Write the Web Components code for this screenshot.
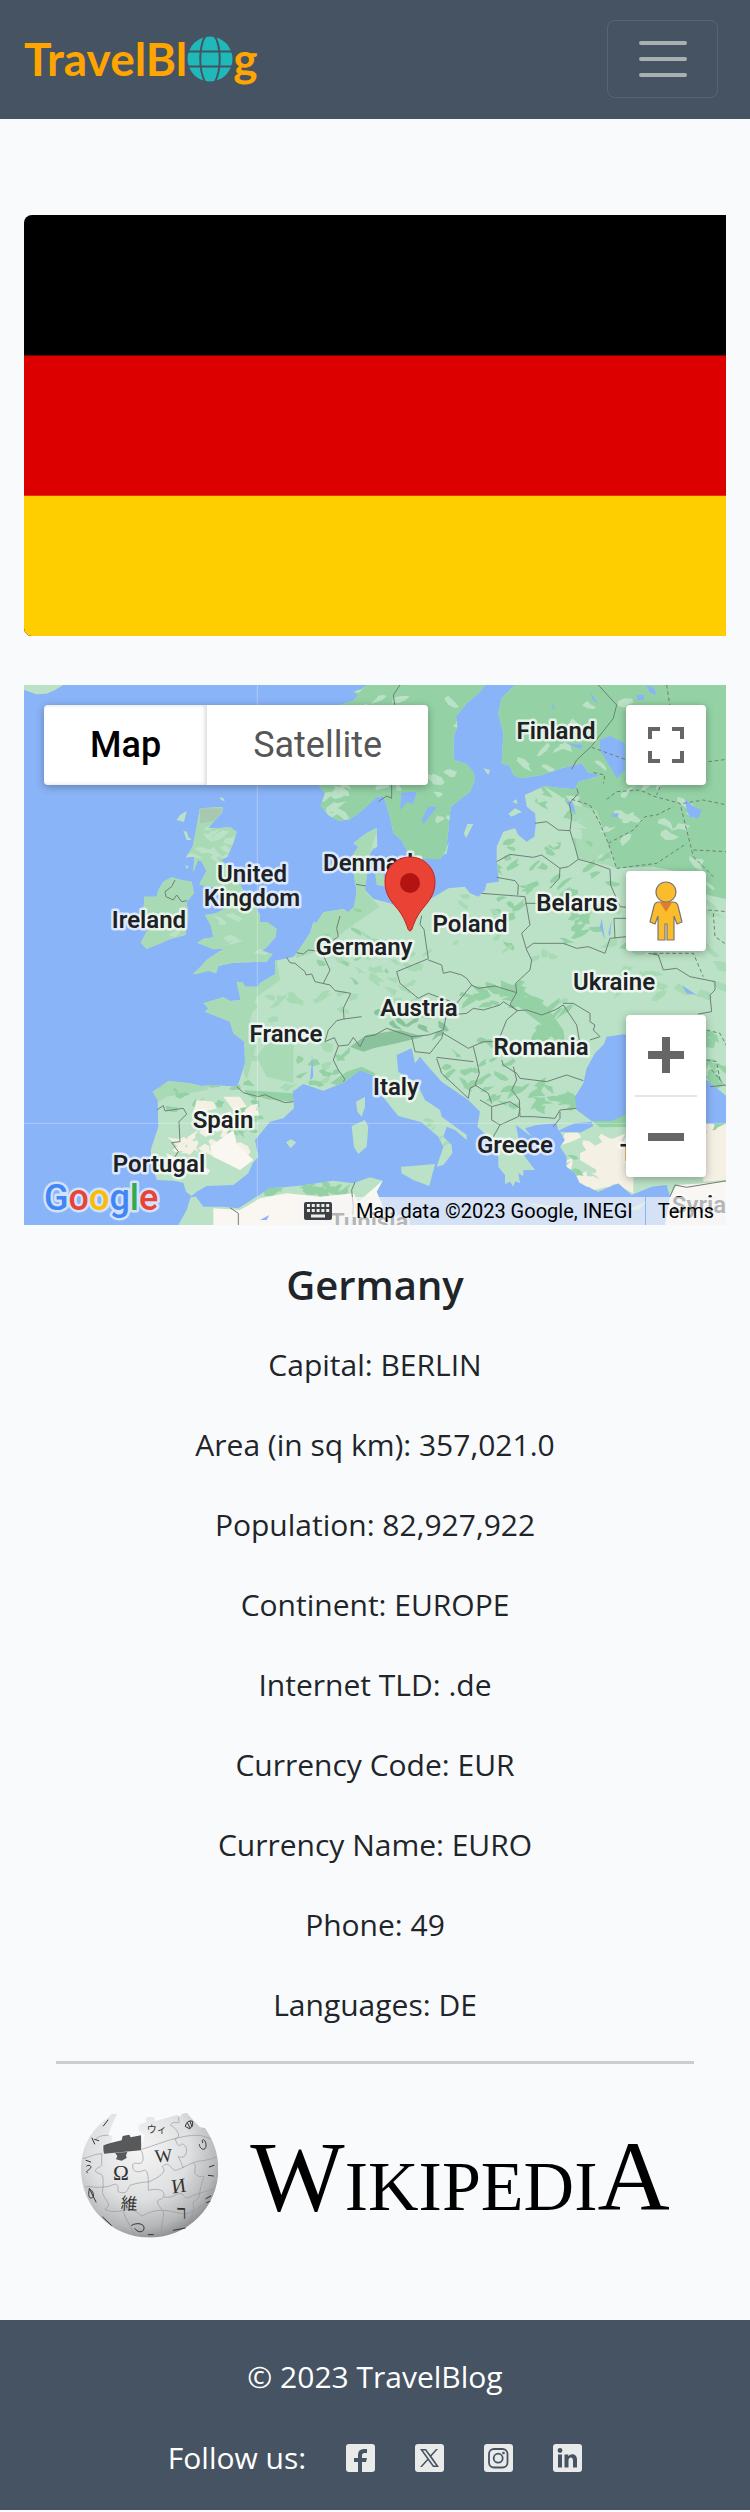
<!DOCTYPE html>
<html lang="en">
<head>
<meta charset="utf-8">
<meta name="viewport" content="width=device-width, initial-scale=1">
<title>TravelBlog - Germany</title>
<style>
  body { margin: 0; background: #f9fafc; color: #212529; font-family: "Open Sans", "Noto Sans", sans-serif; font-size: 30px; line-height: 48px; }
  main { padding: 96px 24px 80px; }
</style>
</head>
<body>
<site-header></site-header>
<main>
  <country-flag></country-flag>
  <country-map></country-map>
  <country-facts name="Germany">
    <country-fact label="Capital">BERLIN</country-fact>
    <country-fact label="Area (in sq km)">357,021.0</country-fact>
    <country-fact label="Population">82,927,922</country-fact>
    <country-fact label="Continent">EUROPE</country-fact>
    <country-fact label="Internet TLD">.de</country-fact>
    <country-fact label="Currency Code">EUR</country-fact>
    <country-fact label="Currency Name">EURO</country-fact>
    <country-fact label="Phone">49</country-fact>
    <country-fact label="Languages">DE</country-fact>
  </country-facts>
  <wiki-link href="https://en.wikipedia.org/wiki/Germany"></wiki-link>
</main>
<site-footer>
  <social-link label="Facebook" icon="facebook"></social-link>
  <social-link label="X" icon="x"></social-link>
  <social-link label="Instagram" icon="instagram"></social-link>
  <social-link label="LinkedIn" icon="linkedin"></social-link>
</site-footer>

<script>
class BaseElement extends HTMLElement {
  connectedCallback() {
    if (this.shadowRoot) return;
    this.attachShadow({ mode: 'open' }).innerHTML = this.render();
  }
}

customElements.define('site-header', class extends BaseElement {
  render() {
    return `<style>
      :host { display: block; background: #465362; }
      nav { display: flex; align-items: center; justify-content: space-between; padding: 20px 32px 21px 24px; }
      a { display: flex; align-items: center; color: #ffa500; font: 700 46px/56px Lato, sans-serif; text-decoration: none; }
      a svg { width: 46px; height: 46px; flex: none; }
      button { display: flex; align-items: center; justify-content: center; width: 111px; height: 78px; padding: 0; background: none; border: 1px solid rgba(255,255,255,.1); border-radius: 8px; }
      button svg { width: 60px; height: 60px; }
    </style>
    <nav>
      <a href="#" aria-label="TravelBlog"><span>TravelBl</span><svg viewBox="0 0 46 46" aria-hidden="true"><circle cx="23" cy="23" r="22.5" fill="#20b9b9"/><g fill="none" stroke="#465362" stroke-width="2"><path d="M0 15.5H46M0 30.5H46M18.500-1C11.500 12 11.500 34 18.500 47M27.500-1C34.500 12 34.500 34 27.500 47"/></g><path d="M17.700 0L19.500 0 18 3zM28.300 0L26.500 0 28 3z" fill="#465362"/></svg><span>g</span></a>
      <button type="button" aria-label="Toggle navigation"><svg viewBox="0 0 30 30" aria-hidden="true"><path stroke="#a8b0b4" stroke-linecap="round" stroke-miterlimit="10" stroke-width="2" d="M4 7h22M4 15h22M4 23h22"/></svg></button>
    </nav>`;
  }
});

customElements.define('country-flag', class extends BaseElement {
  render() {
    return `<style>
      :host { display: block; }
      svg { display: block; width: 100%; height: auto; border-radius: 8px 0 0 8px; }
    </style>
    <svg viewBox="0 0 5 3" role="img" aria-label="Flag of Germany"><path d="M0 0h5v3H0z"/><path fill="#d00" d="M0 1h5v2H0z"/><path fill="#ffce00" d="M0 2h5v1H0z"/></svg>`;
  }
});

const LAND = {
  iceland: 'M72 75H190L165 90 140 101 110 103 72 90z',
  britain: 'M600 445L668 441 666 458 640 485 625 505 660 504 690 501 710 515 700 548 682 590 662 600 690 620 712 660 735 700 765 740 780 765 780 786 802 787 830 806 826 832 800 862 786 872 818 882 800 905 700 908 655 918 648 940 625 932 598 940 578 943 600 922 620 900 650 880 672 866 640 868 592 848 610 836 640 832 632 795 615 765 648 760 672 748 655 700 640 680 612 678 598 672 620 632 605 605 594 600 580 636 583 590 558 592 578 560 582 540 590 500z',
  hebrides: 'M560 453L552 486 530 480 540 465zM550 512L560 515 565 530 575 540 560 540zM658 412L670 414 674 424 664 420zM556 614L566 620 560 628z',
  ireland: 'M475 690L490 665 515 652 545 660 575 665 582 700 560 725 565 765 556 825 510 838 470 855 440 866 422 848 440 815 445 790 430 760 433 710 470 710z',
  scandinavia: 'M1022 134L1060 122 1075 105 1060 95 1085 88 1100 75H1455L1440 96 1400 130 1368 170 1372 200 1360 230 1362 300 1400 312 1422 340 1424 362 1410 395 1352 440 1344 520 1338 572 1320 597 1260 597 1222 573 1204 540 1180 519 1170 470 1160 437 1150 408 1130 411 1085 452 1050 478 1015 483 985 465 962 437 975 400 955 375 960 250z',
  continent: 'M1545 75L1505 115 1495 160 1510 220 1505 310 1530 318 1540 345 1565 355 1625 345 1685 325 1745 310 1765 338 1805 345 1765 357 1735 365 1725 388 1685 385 1635 378 1575 405 1580 440 1605 460 1608 490 1603 530 1580 545 1555 525 1545 505 1510 515 1490 560 1490 600 1497 665 1460 670 1455 690 1435 710 1410 700 1395 680 1345 685 1295 715 1250 725 1200 740 1165 728 1120 716 1095 690 1100 650 1112 575 1132 560 1130 504 1100 519 1060 550 1075 560 1055 590 1060 633 1070 695 1062 740 1045 757 1030 747 970 757 950 788 940 787 930 820 900 865 880 891 825 902 825 943 780 969 775 980 735 980 728 967 710 965 722 1020 690 1023 670 1012 610 1030 625 1045 615 1055 690 1085 700 1120 733 1145 735 1210 712 1280 640 1275 605 1278 570 1270 505 1263 480 1280 458 1295 473 1320 475 1400 452 1470 455 1500 462 1530 470 1560 520 1562 550 1568 558 1595 575 1608 590 1595 620 1578 700 1575 745 1540 758 1510 775 1490 765 1440 790 1410 810 1385 850 1375 882 1345 878 1295 910 1272 970 1292 1030 1268 1080 1230 1125 1248 1140 1300 1195 1368 1265 1387 1315 1430 1330 1460 1322 1485 1310 1520 1330 1515 1357 1480 1355 1455 1330 1430 1340 1400 1365 1410 1400 1440 1400 1425 1325 1370 1320 1350 1275 1320 1250 1270 1195 1235 1190 1185 1235 1165 1245 1210 1260 1190 1285 1220 1325 1265 1405 1320 1440 1355 1432 1400 1475 1440 1495 1490 1495 1520 1515 1545 1515 1572 1530 1565 1540 1580 1546 1564 1560 1570 1555 1540 1570 1548 1570 1530 1605 1530 1575 1490 1560 1460 1548 1395 1595 1430 1575 1405 1610 1395 1670 1390 1675 1412 1700 1400 1725 1390 1775 1385 1780 1398 1740 1418 1680 1415 1695 1440 1680 1460 1700 1490 1700 1520 1725 1540 1740 1570 1795 1595 1855 1570 1895 1605 1955 1580 2000 1575 2010 1610 1995 1695H2181V75z',
  africa: 'M535 1695L560 1650 572 1612 588 1610 610 1640 670 1640 715 1645 770 1610 810 1585 900 1577 1000 1562 1060 1570 1110 1552 1148 1562 1130 1595 1145 1630 1160 1695z',
  islands: 'M1203 1520L1235 1518 1305 1512 1288 1578 1240 1560 1205 1540zM1055 1398L1095 1380 1105 1400 1100 1460 1075 1482 1062 1462zM1068 1325L1095 1310 1095 1340 1085 1370 1072 1355zM858 1447L872 1438 889 1447 872 1465zM1525 462L1545 445 1565 455 1535 470zM1537 425L1550 418 1552 432zM1450 325L1470 330 1465 345zM1392 520L1402 492 1420 492 1398 535zM1330 585L1347 545 1340 580zM1575 1628L1630 1634 1690 1640 1640 1648zM1880 1650L1940 1625 1915 1650z'
};

const BORDERS = [
  '470 1350 490 1337 495 1353 550 1345 560 1362 537 1385 540 1445 515 1448 535 1475 525 1490',
  '710 1280 730 1298 775 1310 795 1304 820 1315 855 1328 880 1325',
  '860 892 870 908 885 910 915 935 918 945 935 942 945 965 990 975 1005 992 1052 1000 1030 1045 1032 1077 1085 1070',
  '1032 1077 1010 1082 985 1110 975 1145 1003 1133 1015 1158 1000 1200 1015 1230 1035 1258 1030 1265',
  '1015 1158 1045 1155 1060 1132 1080 1160 1095 1130 1125 1125 1160 1105 1235 1130 1285 1125 1330 1110 1340 1060',
  '890 878 910 882 925 870 965 875 990 930 970 970', '1020 768 1010 805 1015 830 1000 840',
  '525 660 515 680 495 695 498 710 520 720 530 705 545 725 560 722',
  '1265 767 1260 793 1272 808 1278 850 1285 896 1190 935 1200 970 1255 1015 1285 1000 1340 1020 1370 1030 1415 975 1400 955 1385 945 1350 935 1330 940 1325 915 1285 900',
  '1415 975 1435 985 1485 978 1550 998 1547 970 1590 930 1595 900 1580 870 1565 820 1590 795 1575 710 1445 700',
  '1490 652 1545 662 1555 675 1553 705', '1490 605 1530 583 1600 592 1625 585 1680 625 1678 655 1650 685',
  '1680 625 1705 620 1735 598 1780 610 1830 628 1832 675 1860 740 1880 742', '1605 490 1640 485 1675 510 1710 512',
  '1730 385 1735 400 1708 430 1715 470 1710 512 1720 545 1725 560 1735 598',
  '1580 865 1600 850 1690 850 1730 865 1765 860 1815 880 1830 835 1880 830', '1575 730 1610 730', '1845 835 1842 775 1880 775',
  '1795 75 1850 135 1840 175 1775 258 1730 300 1715 328', '1200 75 1180 105 1185 140', '1175 375 1175 415 1160 408 1135 425',
  '1550 998 1530 1033 1552 1052', '1370 1063 1400 1060 1420 1045 1450 1050 1500 1035 1510 1025 1552 1052 1520 1080 1500 1130',
  '1235 1130 1245 1175 1290 1180 1325 1135 1330 1115', '1330 1120 1405 1165 1450 1145 1480 1145',
  '1552 1052 1580 1050 1625 1065 1665 1050 1690 1035 1730 1095 1738 1140', '1690 1030 1720 1030 1770 1060 1770 1085 1785 1095 1780 1110 1800 1130 1770 1140',
  '1505 1200 1510 1215 1550 1240 1560 1255 1640 1265 1700 1245 1750 1262',
  '1420 1160 1430 1200 1438 1240 1425 1275 1465 1300 1475 1330', '1310 1192 1420 1205', '1310 1195 1325 1240 1405 1315 1410 1285 1430 1275',
  '1540 1220 1550 1260 1535 1290 1558 1320 1560 1370', '1560 1370 1600 1370 1665 1375 1680 1350 1730 1345', '1680 1355 1680 1375 1660 1400',
  '1475 1340 1530 1325 1560 1345 1555 1370 1500 1395 1475 1380 1475 1340 1440 1320', '1500 1395 1480 1430',
  '1945 880 1975 885 1990 930 2030 925 2070 950 2145 965 2145 990 2130 1005 2135 1055 2095 1062',
  '2010 1610 2025 1575 2060 1582 2181 1562', '1065 1567 1055 1590 1060 1640 1055 1695', '690 1643 715 1660 715 1695', '1068 673 1098 678', '2130 1280 2181 1275'
];
const REGIONS = [
  '1775 262 1875 298', '1715 418 1770 435 1800 490 1825 550 1850 625', '1825 550 1900 510 1935 470 1970 465 2020 440',
  '1820 418 1850 395 1920 390 1965 410 2040 430 2060 510 2080 590 2140 650', '2080 570 2181 575', '1850 625 1970 610 2060 550',
  '2050 430 2110 420 2181 435', '2125 305 2181 298', '1780 338 1815 345 1810 370', '2000 75 2010 140', '1980 380 1970 405',
  '2125 750 2181 755', '2140 760 2145 830 2181 855', '1960 880 2080 880 2110 950', '2120 1110 2160 1120 2181 1160', '2120 1200 2150 1205 2160 1260', '2135 1230 2165 1265'
];
/* Vegetation shading: centre, spread, fill, count and patch size of each area. */
const SHADES = [
  [1800, 250, 300, 170, '#bbe2c6', 20, 18], [1250, 300, 170, 220, '#bbe2c6', 16, 18], [1900, 560, 260, 160, '#bbe2c6', 24, 20],
  [1650, 600, 170, 230, '#94d2a5', 30, 17], [1650, 460, 90, 80, '#bbe2c6', 16, 26], [2000, 850, 180, 160, '#a8dab5', 16, 22],
  [1700, 750, 180, 110, '#94d2a5', 18, 17], [1750, 950, 280, 110, '#a8dab5', 10, 16], [1130, 920, 160, 130, '#a8dab5', 26, 16],
  [1080, 880, 120, 140, '#94d2a5', 9, 12], [900, 1150, 150, 160, '#a8dab5', 18, 20], [960, 1230, 80, 60, '#94d2a5', 8, 16],
  [1400, 1220, 130, 110, '#94d2a5', 26, 16], [1640, 1310, 110, 55, '#94d2a5', 20, 20], [1240, 1090, 130, 35, '#8ac39b', 10, 16],
  [1480, 1010, 90, 30, '#94d2a5', 16, 22], [1640, 1080, 60, 60, '#94d2a5', 10, 20], [1420, 800, 130, 110, '#a8dab5', 8, 13],
  [620, 1310, 170, 40, '#94d2a5', 12, 16], [650, 1450, 120, 100, '#f5f0e4', 20, 24], [700, 1380, 80, 60, '#94d2a5', 9, 15],
  [1800, 1500, 110, 70, '#f5f0e4', 20, 28], [1700, 1540, 60, 50, '#94d2a5', 9, 14], [650, 800, 140, 90, '#bbe2c6', 8, 18],
  [640, 560, 60, 60, '#bbe2c6', 14, 18], [1010, 420, 50, 50, '#bbe2c6', 10, 20], [1320, 1430, 80, 60, '#a8dab5', 8, 12],
  [900, 1585, 160, 16, '#94d2a5', 12, 20], [2130, 1440, 40, 50, '#f5f0e4', 12, 28], [2140, 1200, 40, 80, '#94d2a5', 10, 20]
];

customElements.define('country-map', class extends BaseElement {
  shades() {
    let seed = 7;
    const rnd = () => (seed = (seed * 16807) % 2147483647) / 2147483647;
    return SHADES.map(([cx, cy, rx, ry, fill, count, size]) => {
      let d = '';
      for (let i = 0; i < count; i++) {
        const x = cx + (rnd() * 2 - 1) * rx, y = cy + (rnd() * 2 - 1) * ry, slant = rnd() * 2 - 1;
        for (let k = 0; k < 7; k++) {
          const a = k * Math.PI * 2 / 7, r = size * (.3 + rnd());
          const px = x + Math.cos(a) * r * 1.3, py = y + Math.sin(a) * r * .7 + Math.cos(a) * r * slant;
          d += (k ? 'L' : 'M') + Math.round(px) + ' ' + Math.round(py);
        }
        d += 'z';
      }
      return `<path fill="${fill}" d="${d}"/>`;
    }).join('');
  }
  render() {
    const all = Object.values(LAND).join('');
    const lines = list => list.map(p => 'M' + p).join('');
    return `<style>
      :host { display: block; position: relative; margin-top: 49px; height: 540px; overflow: hidden; background: #8ab4f8; font-family: Roboto, sans-serif; }
      .map { display: block; width: 100%; height: 100%; }
      .names { font: 600 24px Roboto, sans-serif; fill: #202124; text-anchor: middle; paint-order: stroke; stroke: #fff; stroke-opacity: .7; stroke-width: 5px; stroke-linejoin: round; }
      .names .start { text-anchor: start; }
      .google { font: 500 36px Roboto, sans-serif; paint-order: stroke; stroke: #d3e2fb; stroke-width: 5px; stroke-linejoin: round; }
      button { display: flex; align-items: center; justify-content: center; box-sizing: border-box; margin: 0; padding: 0; border: 0; background: #fff; color: #565656; font: 400 36px/80px Roboto, sans-serif; }
      .types, .tools { position: absolute; top: 20px; }
      .types { left: 20px; display: flex; border-radius: 4px; box-shadow: 0 2px 8px rgba(0,0,0,.3); }
      .types button { padding: 0 46px; border-radius: 0 4px 4px 0; }
      .types button.on { color: #000; font-weight: 500; border-radius: 4px 0 0 4px; box-shadow: inset -2px 0 4px rgba(0,0,0,.15); }
      .tools { right: 20px; display: grid; width: 80px; }
      .tools svg { display: block; }
      .tools > * { border-radius: 4px; box-shadow: 0 2px 8px rgba(0,0,0,.3); }
      .full, .person { height: 80px; }
      .person { margin-top: 86px; }
      .zoom { margin-top: 64px; background: #fff; }
      .zoom button { width: 80px; height: 80px; background: none; }
      .zoom hr { margin: 0 9px; border: 0; height: 2px; background: #e6e6e6; }
      .legal { position: absolute; right: 0; bottom: 0; display: flex; line-height: 28px; gap: 1px; }
      .legal > * { background: rgba(245,245,245,.7); padding: 0 12px; white-space: nowrap; font-size: 20px; line-height: 28px; color: #000; }
      .legal button { padding: 0 12px 0 6px; }
      .legal .data { margin-left: -1px; }
      .legal a { text-decoration: none; }
    </style>
    <svg class="map" viewBox="0 0 702 540" preserveAspectRatio="xMidYMid slice" role="img" aria-label="Map of Europe with a marker on Berlin">
      <defs><clipPath id="land"><path d="${all}"/></clipPath></defs>
      <g transform="scale(.33333) translate(-72 -75)">
        <path fill="#bbe2c6" d="${all}"/>
        <path fill="#a8dab5" d="${LAND.britain}${LAND.ireland}"/>
        <path fill="#94d2a5" d="${LAND.scandinavia}"/>
        <g clip-path="url(#land)">
          <path fill="#94d2a5" d="M1480 60H2190V720L2100 700 2060 640 1960 620 1850 625 1790 600 1735 590 1712 510 1708 430 1600 395 1480 400z"/>
          <path fill="#a8dab5" d="M1710 430L1790 450 1850 620 1735 598z"/>
          <path fill="#a8dab5" d="M1040 490H1140L1115 560 1100 700 1140 740 1080 780 1010 830 960 870 890 895 880 880 950 740z"/>
          <path fill="#a8dab5" d="M600 1010L700 960 780 960 830 900 840 960 770 1010 750 1080 770 1150 740 1260 700 1150 600 1070z"/>
          <path fill="#a8dab5" d="M800 1150H880V1270L800 1250 770 1190zM450 1260H640L620 1290 500 1310 470 1330z"/>
          <path fill="#94d2a5" d="M990 1270L1040 1235 1085 1220 1125 1240 1125 1260 1080 1245 1030 1280zM730 1290L880 1300 880 1325 800 1318zM1760 1370L1900 1360V1400L1800 1402zM2110 1385L2181 1390V1410L2120 1420zM1500 960L1560 985 1640 1040 1690 1110 1700 1180 1620 1090 1530 1020z"/>
          <path fill="#8ac39b" d="M1100 1125L1200 1110 1270 1130 1190 1150 1120 1165 1090 1175 1050 1160z"/>
          ${this.shades()}
          <path fill="#f5f0e4" d="M590 1320L640 1325 650 1345 600 1360 580 1355zM670 1310L720 1310 740 1340 700 1350zM1740 1480L1830 1435 1900 1450V1600L1840 1570 1800 1580 1790 1530 1740 1500zM2110 1420L2181 1410V1560L2110 1565z"/>
          <path fill="#faf7f2" d="M630 1460L700 1410 710 1450 760 1500 720 1530 640 1490zM2010 1610L2030 1575 2181 1565V1700H1990z"/>
          <path fill="#faf7f2" d="M640 1645L720 1650 780 1615 860 1600 960 1610 1060 1600 1075 1625 1150 1560 1170 1700H640z"/>
          <path fill="#a8c9b0" d="M600 445H668L655 480 600 490z"/>
        </g>
        <g fill="#8ab4f8">
          <path d="M1870 1123L1820 1130 1812 1152 1785 1180 1760 1225 1750 1270 1725 1310 1730 1350 1775 1383 1835 1383 1885 1360 1990 1375 2110 1392 2181 1390V1310L2120 1260 2000 1240 1960 1140z"/>
          <path d="M1205 398L1250 395 1240 432 1222 425 1200 450 1202 425zM1285 440L1312 440 1270 492 1265 480zM1800 240L1830 228 1875 250V330L1850 355 1830 320 1800 270zM2055 415L2080 440 2105 450 2095 475 2070 472 2060 450zM1770 97L1795 130 1780 122zM1940 78L1960 80 1970 105 1950 98zM1910 104L1935 105 1930 120H1912zM1835 465L1855 458V470L1835 472zM1697 425H1718L1728 465 1715 450zM1120 560L1135 610 1150 650H1110zM936 1180L940 1250 930 1262 934 1220zM1658 130L1665 148H1657zM2045 975L2090 1005 2060 1000zM780 1680L808 1665 800 1680z"/>
          <path d="M1805 775L1815 840 1800 800zM1835 780L1830 830 1825 820zM1700 250L1750 255 1740 267z"/>
        </g>
        <path fill="#a8dab5" d="M1125 640L1150 640 1160 680 1130 675zM1170 620L1215 605 1220 660 1190 690 1165 660z"/>
        <g fill="none" stroke="#6e7f76" stroke-width="3" stroke-linejoin="round"><path d="${lines(BORDERS)}"/><path stroke-dasharray="11 8" d="${lines(REGIONS)}"/></g>
        <path d="M772 75V1695M72 1390H2181" stroke="#fff" stroke-opacity=".3" stroke-width="3"/>
      </g>
      <g class="names">
        <text x="125" y="243">Ireland</text><text x="228" y="197">United</text><text x="228" y="221">Kingdom</text>
        <text class="start" x="299" y="186">Denmark</text><text x="532" y="54">Finland</text><text x="446" y="247">Poland</text>
        <text x="553" y="226">Belarus</text><text x="340" y="270">Germany</text><text x="590" y="305">Ukraine</text>
        <text x="395" y="331">Austria</text><text x="517" y="370">Romania</text><text x="262" y="357">France</text>
        <text x="372" y="410">Italy</text><text x="199" y="443">Spain</text><text x="135" y="487">Portugal</text>
        <text x="491" y="468">Greece</text><text class="start" x="596" y="476">Turkey</text>
        <text x="675" y="528">Syria</text><text class="start" x="306" y="545">Tunisia</text>
      </g>
      <path d="M386 172C400 172 411 183 411 197C411 208 406 215 400 222C393 230 390 238 388 244Q386 248 384 244C382 238 379 230 372 222C366 215 361 208 361 197C361 183 372 172 386 172z" fill="#ea4335" stroke="#c5221f" stroke-width="1"/>
      <circle cx="386" cy="198" r="10" fill="#b31412"/>
      <text class="google" x="20" y="525" aria-label="Google"><tspan fill="#4285f4">G</tspan><tspan fill="#ea4335">o</tspan><tspan fill="#fbbc04">o</tspan><tspan fill="#4285f4">g</tspan><tspan fill="#34a853">l</tspan><tspan fill="#ea4335">e</tspan></text>
    </svg>
    <div class="types"><button type="button" class="on">Map</button><button type="button">Satellite</button></div>
    <div class="tools">
      <button type="button" class="full" aria-label="Toggle fullscreen view"><svg width="36" height="36" viewBox="0 0 18 18" fill="#666"><path d="M0 0v6h2V2h4V0zM16 0h-4v2h4v4h2V0zM16 16h-4v2h6v-6h-2zM2 12H0v6h6v-2H2z"/></svg></button>
      <button type="button" class="person" aria-label="Street View"><svg width="34" height="60" viewBox="0 0 34 60" stroke="#777" stroke-width="1.200" fill="#fbbc2c"><path d="M10 21H24Q28 21 29 25L33 41 28 43 25 35V59H18V43H16V59H9V35L6 43 1 41 5 25Q6 21 10 21z"/><path d="M11 21.500H23L17 31z" fill="#e07c2d" stroke="none"/><circle cx="17" cy="11" r="10"/></svg></button>
      <div class="zoom"><button type="button" aria-label="Zoom in"><svg width="36" height="36" viewBox="0 0 18 18" fill="#666"><path d="M18 7h-7V0H7v7H0v4h7v7h4v-7h7z"/></svg></button><hr><button type="button" aria-label="Zoom out"><svg width="36" height="36" viewBox="0 0 18 18" fill="#666"><path d="M0 7h18v4H0z"/></svg></button></div>
    </div>
    <div class="legal">
      <button type="button" aria-label="Keyboard shortcuts"><svg width="28" height="18" viewBox="0 0 28 18"><rect width="28" height="18" rx="2" fill="#3c4043"/><path stroke="#eee" stroke-width="3" stroke-dasharray="3 1.800" d="M3 3.500H26M3 8.500H26"/><path stroke="#eee" stroke-width="3" d="M7 14H21"/></svg></button>
      <span class="data">Map data ©2023 Google, INEGI</span><a href="#terms">Terms</a>
    </div>`;
  }
});

customElements.define('country-facts', class extends BaseElement {
  render() {
    return `<style>
      :host { display: block; margin-top: 32px; text-align: center; }
      h1 { margin: 0 0 28px; font-size: 40px; line-height: 56px; font-weight: 600; }
      .list { display: grid; gap: 32px; padding-bottom: 32px; margin: 0 32px; border-bottom: 3px solid #cbcdcf; }
    </style>
    <h1>${this.getAttribute('name')}</h1><div class="list"><slot></slot></div>`;
  }
});

customElements.define('country-fact', class extends BaseElement {
  render() {
    return `<style>:host { display: block; }</style>${this.getAttribute('label')}: <slot></slot>`;
  }
});

customElements.define('wiki-link', class extends BaseElement {
  render() {
    return `<style>
      :host { display: block; padding: 48px 48px 0; }
      a { display: flex; align-items: center; justify-content: center; gap: 30px; color: #000; text-decoration: none; }
      svg { flex: none; width: 140px; height: 128px; }
      .word { font: 70px/88px "Liberation Serif", serif; white-space: nowrap; padding-top: 12px; }
      .big { font-size: 100px; }
    </style>
    <a href="${this.getAttribute('href')}" aria-label="Wikipedia">
      <svg viewBox="120 220 420 384" aria-hidden="true">
        <defs>
          <radialGradient id="ball" cx=".42" cy=".35" r=".68"><stop offset="0" stop-color="#f6f6f6"/><stop offset=".55" stop-color="#dedfe0"/><stop offset=".85" stop-color="#b5b6b8"/><stop offset="1" stop-color="#8b8c8e"/></radialGradient>
          <clipPath id="shape"><path d="M232 225L215 226 200 240C150 275 123 330 123 391C123 505 215 597 329 597S535 505 535 391C535 345 520 305 495 268L480 266 460 245 440 222 425 226 420 236 412 228 380 238 345 247 342 236 325 234 316 240 320 250 295 258 296 278 315 288 303 335 192 345 186 322 215 310 217 292 205 288 215 262 222 245z"/></clipPath>
        </defs>
        <path fill="#58595b" d="M190 318L245 305 248 292 268 288 272 296 303 290 304 340 190 350z"/>
        <g clip-path="url(#shape)">
          <path fill="url(#ball)" d="M123 185H535V597H123z"/>
          <g fill="none" stroke="#98999b" stroke-width="2">
            <path d="M186 345C182 375 190 380 178 385S160 400 178 405 186 430 190 445C215 445 225 430 232 440S225 460 245 462 262 450 270 440C300 430 320 430 325 430"/>
            <path d="M304 335C310 350 312 365 305 372S275 365 278 385 300 400 312 395 325 420 325 430 325 445 325 455C345 450 372 450 372 468S350 480 352 490 365 510 370 520 360 560 365 590"/>
            <path d="M304 332C340 322 380 305 405 300S405 265 395 262 400 248 412 252 410 240 420 230M405 300C412 318 415 325 422 318S445 325 438 345 412 350 415 355 425 375 430 388"/>
            <path d="M325 430C350 420 372 405 372 395S360 385 375 378 395 395 405 395 440 380 460 372 490 370 530 355M405 300C440 290 460 290 475 290S500 300 520 300"/>
            <path d="M460 372C475 385 455 400 470 410S495 405 490 420 480 450 478 470 455 480 460 500 450 540 440 570M372 475C400 480 405 465 420 465S430 485 450 475 478 465 520 450"/>
            <path d="M190 445C180 470 200 480 205 495S185 510 200 515 230 520 250 515 280 515 290 520 300 535 310 530 340 515 365 515 400 520 425 525 470 510 500 490M190 445C170 450 150 440 135 445M186 345C165 345 150 355 128 360M250 515C255 540 270 560 285 590M168 300C180 290 195 290 205 290"/>
          </g>
        </g>
        <path fill="#58595b" d="M225 342L262 340 258 350 260 358 245 366 228 362 232 352z"/>
        <g fill="#333" font-family="Liberation Serif, Noto Sans CJK JP, serif" text-anchor="middle">
          <text x="243" y="425" font-size="64">Ω</text><text x="370" y="370" font-size="56" transform="rotate(-5 370 350)">W</text>
          <text x="416" y="462" font-size="60" transform="rotate(-8 416 440)">И</text><text x="268" y="513" font-size="50" transform="rotate(4 268 490)">維</text>
          <text x="350" y="284" font-size="30">ウィ</text><text x="425" y="540" font-size="58">ר</text>
        </g>
        <g fill="none" stroke="#333" stroke-linecap="round">
          <path d="M436 262Q442 242 458 248Q462 262 450 270zM442 252L450 268M450 248L456 264M478 318C480 335 500 338 498 318S482 300 488 312M138 365L152 370M140 382C150 375 158 385 148 392S138 400 142 402M148 450C160 455 165 475 155 478S145 465 148 450L168 490M156 298L164 316M164 302L176 306M190 262L204 244M188 535L214 560M275 560C290 550 315 555 312 570S290 580 285 570M400 575L436 568M505 410L520 412M508 385L522 380M498 480L512 472M500 492L510 488M325 588H340" stroke-width="3"/>
        </g>
      </svg>
      <span class="word"><span class="big">W</span>IKIPEDI<span class="big">A</span></span>
    </a>`;
  }
});

customElements.define('site-footer', class extends BaseElement {
  render() {
    return `<style>
      :host { display: block; background: #465362; color: #fff; text-align: center; padding: 33px 24px 28px; }
      p { margin: 0; }
      .follow { display: flex; align-items: center; justify-content: center; gap: 40px; margin-top: 33px; }
    </style>
    <p>© 2023 TravelBlog</p>
    <div class="follow"><span>Follow us:</span><slot></slot></div>`;
  }
});

const ICONS = {
  facebook: '<path fill="#465362" d="M12 28V18H8V14H12V11Q12 5 18 5H21V9H18.500Q16 9 16 11.500V14H21L20 18H16V28z"/>',
  x: '<path fill="#465362" fill-rule="evenodd" d="M5 5H11L15.500 11 21 5H23L16.500 12.300 24 23H18L13 16.200 7 23H5L12.200 15zM8 6.500L18.800 21.500H21L10.200 6.500z"/>',
  instagram: '<g fill="none" stroke="#465362" stroke-width="1.800"><rect x="5" y="5" width="18.500" height="18.500" rx="5"/><circle cx="14.200" cy="14.200" r="4.500"/></g><circle cx="19.500" cy="9" r="1.300" fill="#465362"/>',
  linkedin: '<path fill="#465362" d="M5 10.500H9V23.500H5zM11.500 10.500H15.300V12.300C17.500 9 24 9.500 24 15.500V23.500H20V16.500C20 12.500 15.500 12.800 15.500 16.500V23.500H11.500z"/><circle cx="7" cy="6.500" r="2.400" fill="#465362"/>'
};
customElements.define('social-link', class extends BaseElement {
  render() {
    return `<style>
      :host { display: block; }
      a, svg { display: block; width: 29px; height: 28px; }
    </style>
    <a href="#" aria-label="${this.getAttribute('label')}"><svg viewBox="0 0 29 28" aria-hidden="true"><rect width="29" height="28" rx="3" fill="#e9ebea"/>${ICONS[this.getAttribute('icon')]}</svg></a>`;
  }
});
</script>
</body>
</html>
